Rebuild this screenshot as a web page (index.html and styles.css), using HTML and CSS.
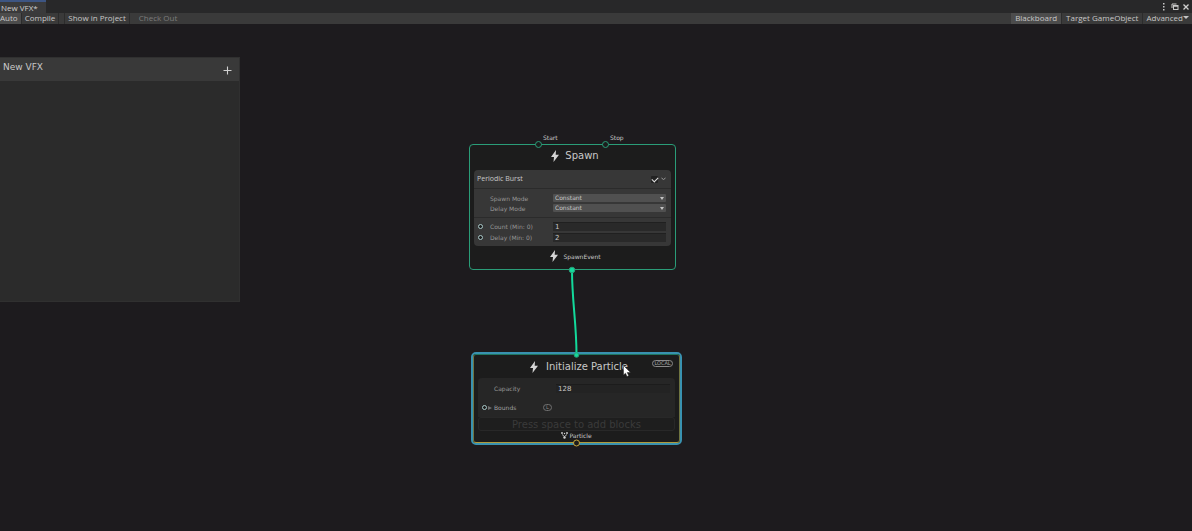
FILE: index.html
```html
<!DOCTYPE html>
<html lang="en">
<head>
  <meta charset="UTF-8">
  <meta name="viewport" content="width=device-width, initial-scale=1.0">
  <title>New VFX</title>
  <link rel="stylesheet" href="styles.css">
</head>
<body>
  <header class="tab-strip">
    <div class="tab">New VFX*</div>
    <div class="window-buttons">
      <button type="button" aria-label="Menu">
        <svg width="8" height="8" viewBox="0 0 8 8" fill="#c8c8c8"><rect x="3" y="0" width="1.5" height="1.5"/><rect x="3" y="3" width="1.5" height="1.5"/><rect x="3" y="6" width="1.5" height="1.5"/></svg>
      </button>
      <button type="button" aria-label="Maximize">
        <svg width="8" height="8" viewBox="0 0 8 8" fill="none" stroke="#c8c8c8"><path d="M1 5V1h4.500"/><rect x="2.500" y="2.500" width="4.500" height="4"/><path d="M2.500 3h4.500" stroke-width="1.500"/></svg>
      </button>
      <button type="button" aria-label="Close">
        <svg width="8" height="8" viewBox="0 0 8 8" fill="none" stroke="#d0d0d0" stroke-width="1.3"><path d="M1.500 1.500l5 5M6.500 1.500l-5 5"/></svg>
      </button>
    </div>
  </header>

  <nav class="toolbar">
    <button type="button" class="active auto">Auto</button>
    <button type="button" class="compile">Compile</button>
    <span class="separator"></span>
    <button type="button" class="show">Show in Project</button>
    <button type="button" class="checkout" disabled>Check Out</button>
    <span class="spacer"></span>
    <button type="button" class="active">Blackboard</button>
    <button type="button">Target GameObject</button>
    <button type="button" class="advanced">Advanced<i class="arrow"></i></button>
  </nav>

  <main class="graph">
    <section class="blackboard">
      <div class="blackboard-header">
        <h2>New VFX</h2>
        <button type="button" aria-label="Add property">
          <svg width="9" height="9" viewBox="0 0 9 9" stroke="#d0d0d0" stroke-width="1.1"><path d="M4.500 .5v8M.5 4.500h8"/></svg>
        </button>
      </div>
    </section>

    <!-- Spawn context -->
    <article class="node spawn">
      <div class="port port-start"><span>Start</span></div>
      <div class="port port-stop"><span>Stop</span></div>
      <h3>
        <svg class="bolt" viewBox="0 0 8 12"><path d="M5 0L0 7h3L2.500 12 8 4.800H4.700z"/></svg>
        Spawn
      </h3>
      <div class="block">
        <div class="block-header">
          <label for="burst">Periodic Burst</label>
          <input type="checkbox" id="burst" checked>
          <svg class="chevron" width="5" height="4" viewBox="0 0 5 4"><path d="M.5 1l2 1.500 2-1.500"/></svg>
        </div>
        <div class="rows">
          <div class="row">
            <label for="spawnMode">Spawn Mode</label>
            <div class="dropdown"><select id="spawnMode"><option>Constant</option></select><i class="arrow"></i></div>
          </div>
          <div class="row">
            <label for="delayMode">Delay Mode</label>
            <div class="dropdown"><select id="delayMode"><option>Constant</option></select><i class="arrow"></i></div>
          </div>
        </div>
        <div class="rows values">
          <div class="row">
            <i class="pin"></i>
            <label for="count">Count (Min: 0)</label>
            <input type="text" id="count" value="1">
          </div>
          <div class="row">
            <i class="pin"></i>
            <label for="delay">Delay (Min: 0)</label>
            <input type="text" id="delay" value="2">
          </div>
        </div>
      </div>
      <div class="node-footer">
        <svg class="bolt" viewBox="0 0 8 12"><path d="M5 0L0 7h3L2.500 12 8 4.800H4.700z"/></svg>
        SpawnEvent
      </div>
    </article>

    <!-- Initialize context, selected -->
    <article class="node initialize">
      <div class="node-inner">
        <h3>
          <svg class="bolt" viewBox="0 0 8 12"><path d="M5 0L0 7h3L2.500 12 8 4.800H4.700z"/></svg>
          Initialize Particle
        </h3>
        <button type="button" class="space-badge">LOCAL</button>
        <div class="settings">
          <div class="row">
            <label for="capacity">Capacity</label>
            <input type="text" id="capacity" value="128">
          </div>
          <div class="row bounds">
            <i class="pin"></i>
            <i class="foldout"></i>
            <span class="name">Bounds</span>
            <span class="local-mark">L</span>
          </div>
        </div>
        <div class="drop-area">Press space to add blocks</div>
        <div class="node-footer">
          <svg width="7" height="7" viewBox="0 0 7 7" fill="#d0d0d0"><circle cx="1" cy="1" r=".9"/><circle cx="3.500" cy="1.500" r=".7"/><circle cx="6" cy="1" r=".9"/><path d="M1 2.500l2.500 2L6 2.500" fill="none" stroke="#d0d0d0" stroke-width=".8"/><circle cx="3.500" cy="5.500" r="1.200"/></svg>
          Particle
        </div>
      </div>
    </article>

    <!-- Flow edge and its anchors -->
    <svg class="edges" width="240" height="200" viewBox="460 260 240 200">
      <path class="edge" d="M572 270C572 302 576.500 322 576.500 355"/>
      <circle class="anchor" cx="572" cy="270" r="2.800"/>
      <circle class="anchor" cx="576.500" cy="355" r="2.300"/>
      <circle class="anchor-out" cx="576.500" cy="443" r="3"/>
    </svg>
    <svg class="cursor" width="8" height="12" viewBox="0 0 8 12"><path d="M.5 .5v9.500l2-1.800 1.500 3.300 1.700-.7-1.500-3.300h3.300z"/></svg>
  </main>
</body>
</html>
```
FILE: styles.css
```css
* {
  box-sizing: border-box;
}

body {
  margin: 0;
  min-height: 100vh;
  display: flex;
  flex-direction: column;
  background: #1d1b1e;
  color: #c8c8c8;
  font-family: "DejaVu Sans", sans-serif;
  font-size: 6px;
  overflow: hidden;
}

button, input, select {
  font: inherit;
  color: inherit;
  margin: 0;
  padding: 0;
  border: none;
  background: none;
  outline: none;
}

h2, h3 {
  margin: 0;
  font-weight: normal;
}

svg {
  display: block;
}

.arrow {
  border: 2px solid transparent;
  border-top: 3px solid #c4c4c4;
  border-bottom: none;
}

/* Window tab */
.tab-strip {
  display: flex;
  justify-content: space-between;
  height: 13px;
  background: #282829;
}

.tab {
  width: 46px;
  padding-left: 1px;
  border-top: 2px solid #3d5583;
  background: #3a3a3b;
  font: 8px/11px "Open Sans", sans-serif;
  color: #d0d0d0;
}

.window-buttons {
  display: flex;
  align-items: center;
  gap: 3px;
  padding-right: 2px;
}

/* Toolbar */
.toolbar {
  display: flex;
  height: 11px;
  background: #3a3a3a;
  font: 8px/9px "Open Sans", sans-serif;
}

.toolbar button {
  padding: 0 4px 2px;
  border-right: 1px solid #2c2c2c;
  white-space: nowrap;
}

.toolbar .active {
  background: #4c4c4c;
}

.toolbar .auto {
  padding: 0 3px 2px 0;
}

.toolbar .compile {
  padding: 0 3px 2px;
}

.toolbar .separator {
  width: 6px;
  border-right: 1px solid #2c2c2c;
}

.toolbar .show {
  padding: 0 3px 2px;
}

.toolbar .checkout {
  padding-left: 9px;
  border: none;
  color: #7c7c7c;
}

.toolbar .spacer {
  flex: 1;
}

.toolbar .advanced {
  display: flex;
  align-items: center;
  padding: 0 3px 2px;
  border: none;
}

.toolbar .arrow {
  border-width: 3px 3px 0;
}

.graph {
  position: relative;
  flex: 1;
}

/* Blackboard */
.blackboard {
  position: absolute;
  left: 0;
  top: 33px;
  width: 240px;
  height: 245px;
  border: 1px solid #303030;
  border-left: none;
  background: #2b2b2b;
}

.blackboard-header {
  display: flex;
  justify-content: space-between;
  height: 23px;
  padding: 2px 7px 0 3px;
  background: #393939;
}

.blackboard h2 {
  font-size: 9px;
  line-height: 14px;
}

/* Nodes */
.node {
  position: absolute;
  background: #1c1c1c;
}

.node h3 {
  display: flex;
  align-items: center;
  justify-content: center;
  gap: 6px;
  padding-left: 5px;
  font-size: 10px;
  line-height: 12px;
}

.bolt {
  width: 8px;
  height: 12px;
  fill: #d4d4d4;
}

.node-footer {
  display: flex;
  align-items: center;
  justify-content: center;
}

.row {
  display: flex;
  align-items: center;
}

.row label {
  color: #969696;
}

.pin {
  width: 5px;
  height: 5px;
  border: 1px solid #a9c9c9;
  border-radius: 50%;
  background: #1c1c1c;
}

.spawn {
  left: 469px;
  top: 120px;
  width: 207px;
  height: 126px;
  padding: 0 4px;
  border: 1px solid #2a9d78;
  border-radius: 4px;
}

.spawn h3 {
  height: 25px;
  padding-bottom: 3px;
}

.port {
  position: absolute;
  top: -4px;
  width: 7px;
  height: 7px;
  border: 1px solid #2a9d78;
  border-radius: 50%;
  background: #1c1c1c;
}

.port span {
  position: absolute;
  left: 4px;
  bottom: 6px;
  padding-left: 3px;
  line-height: 7px;
}

.port-start {
  left: 65px;
}

.port-stop {
  left: 132px;
}

.block {
  border-radius: 4px;
  background: #373737;
}

.block-header {
  display: flex;
  align-items: center;
  height: 19px;
  padding: 0 5px 0 3px;
  border-bottom: 1px solid #2b2b2b;
}

.block-header label {
  flex: 1;
  font: 7px/10px "Open Sans", sans-serif;
}

input[type="checkbox"] {
  appearance: none;
  width: 7px;
  height: 7px;
  border-radius: 1px;
  background: #222;
}

input[type="checkbox"]:checked::after {
  content: "";
  display: block;
  width: 5px;
  height: 3px;
  margin: 1px;
  border-left: 1px solid #e0e0e0;
  border-bottom: 1px solid #e0e0e0;
  transform: rotate(-45deg);
}

.chevron {
  margin-left: 3px;
  fill: none;
  stroke: #9a9a9a;
}

.rows {
  padding: 4px 5px 4px 4px;
}

.rows .row {
  height: 10px;
}

.rows label {
  width: 63px;
}

.rows .row label:first-child {
  margin-left: 12px;
}

.dropdown {
  position: relative;
  flex: 1;
}

.dropdown select {
  display: block;
  appearance: none;
  width: 100%;
  height: 8px;
  padding-left: 2px;
  border-radius: 1px;
  background: #505050;
  line-height: 8px;
}

.dropdown .arrow {
  position: absolute;
  right: 2px;
  top: 3px;
}

.values {
  padding: 3px 5px;
  border-top: 1px solid #2b2b2b;
}

.values .row {
  height: 11px;
}

.values .row {
  margin-left: -1px;
}

.values .pin {
  margin-right: 7px;
}

.row input {
  flex: 1;
  min-width: 0;
  height: 9px;
  padding-left: 2px;
  border-top: 1px solid #202020;
  background: #292929;
  font-size: 7px;
  line-height: 8px;
}

.spawn .node-footer {
  height: 20px;
  gap: 5px;
  padding-left: 6px;
}

/* Selected node: blue outline around the green/orange frame */
.initialize {
  left: 471px;
  top: 328px;
  width: 211px;
  height: 93px;
  border: 2px solid #3992b0;
  border-radius: 5px;
}

.node-inner {
  height: 100%;
  padding: 0 4px;
  border: 1px solid;
  border-color: #1f7660 #6f7440 #b09a3c;
  border-radius: 3px;
}

.initialize h3 {
  height: 23px;
  gap: 8px;
}

.space-badge {
  position: absolute;
  right: 7px;
  top: 6px;
  width: 21px;
  height: 7px;
  border: 1px solid #8a8a8a;
  border-radius: 4px;
  font-size: 5px;
  line-height: 5px;
  color: #a4a4a4;
}

.settings {
  padding: 4px 5px 4px 4px;
  border-radius: 4px 4px 0 0;
  background: #262626;
}

.settings label {
  width: 62px;
  margin-left: 12px;
}

.settings .row input {
  background: #232323;
  border-color: #1c1c1c;
}

.settings .row {
  height: 12px;
}

.settings .bounds {
  height: 11px;
  margin-top: 8px;
}

.foldout {
  margin: 0 2px 0 1px;
  border: 2px solid transparent;
  border-left: 4px solid #707070;
  border-right: none;
}

.bounds .name {
  width: 49px;
  color: #a0a0a0;
}

.local-mark {
  width: 9px;
  height: 7px;
  border: 1px solid #707070;
  border-radius: 4px;
  font-size: 5px;
  line-height: 5px;
  text-align: center;
  color: #8a8a8a;
}

.drop-area {
  height: 14px;
  border: 1px solid #282828;
  border-radius: 3px;
  font-size: 10px;
  line-height: 13px;
  text-align: center;
  color: #3a3a3a;
  background: #1e1e1e;
}

.initialize .node-footer {
  height: 8px;
  gap: 1px;
}

.edges {
  position: absolute;
  left: 460px;
  top: 236px;
  pointer-events: none;
}

.edge {
  fill: none;
  stroke: #13d99b;
  stroke-width: 2;
}

.anchor {
  fill: #13d99b;
  stroke: #2a9d78;
}

.anchor-out {
  fill: #1c1c1c;
  stroke: #c9a83c;
}

.cursor {
  position: absolute;
  left: 623px;
  top: 341px;
  fill: #fff;
  stroke: #222;
  stroke-width: .5;
}
```
